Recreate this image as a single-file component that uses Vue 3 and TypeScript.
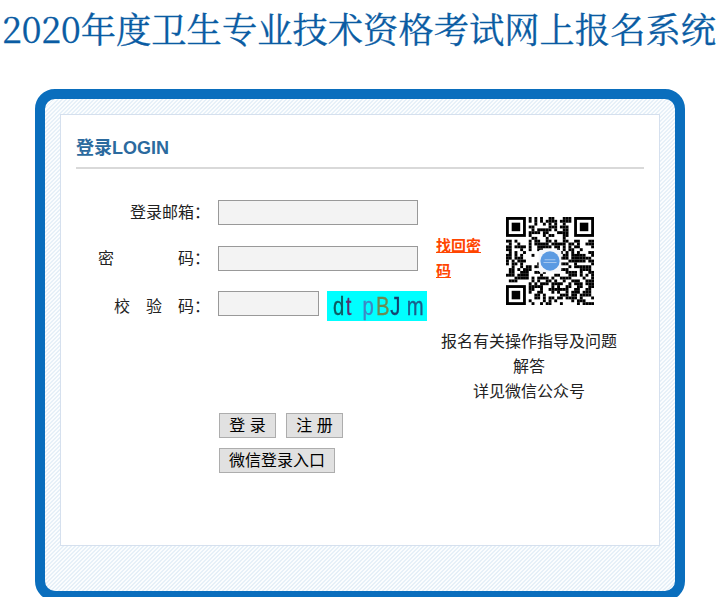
<script setup lang="ts">
const size = 31
function isFinder(x: number, y: number): boolean {
  return (x < 8 && y < 8) || (x >= size - 8 && y < 8) || (x < 8 && y >= size - 8)
}
function cells(): { x: number; y: number }[] {
  const out: { x: number; y: number }[] = []
  let s = 20200317
  for (let y = 0; y < size; y++) {
    for (let x = 0; x < size; x++) {
      s = (s * 1103515245 + 12345) & 0x7fffffff
      const on = ((s >> 16) & 7) < 4
      if (!isFinder(x, y) && on) out.push({ x, y })
    }
  }
  return out
}
const modules = cells()
const finders = [
  { x: 0, y: 0 },
  { x: size - 7, y: 0 },
  { x: 0, y: size - 7 },
]
const letters = [
  { t: 'd', c: 'c-d' },
  { t: 't', c: 'c-t' },
  { t: 'p', c: 'c-p' },
  { t: 'B', c: 'c-b' },
  { t: 'J', c: 'c-j' },
  { t: 'm', c: 'c-m' },
]
</script>

<template>
  <div class="page">
    <h1 class="title">2020年度卫生专业技术资格考试网上报名系统</h1>
    <div class="box">
      <div class="panel">
        <h2 class="heading">登录LOGIN</h2>
        <div class="layout">
          <div class="fields">
            <div class="row row-a">
              <label class="label">登录邮箱：</label>
              <input class="input" type="text" />
            </div>
            <div class="row row-b">
              <label class="label">密　　　　码：</label>
              <input class="input" type="password" />
            </div>
            <div class="row row-c">
              <label class="label">校　验　码：</label>
              <input class="input input-short" type="text" />
              <div class="captcha">
                <div class="captcha-text">
                  <span v-for="l in letters" :key="l.t" :class="l.c">{{ l.t }}</span>
                </div>
              </div>
            </div>
          </div>
          <a class="forgot" href="#">找回密码</a>
          <div class="qr-wrap">
            <svg class="qr" :viewBox="`0 0 ${size} ${size}`" width="88" height="88">
              <rect v-for="(m, i) in modules" :key="i" :x="m.x" :y="m.y" width="1.02" height="1.02" fill="#000" />
              <g v-for="(f, i) in finders" :key="'f' + i">
                <rect :x="f.x + 0.5" :y="f.y + 0.5" width="6" height="6" fill="none" stroke="#000" stroke-width="1" />
                <rect :x="f.x + 2" :y="f.y + 2" width="3" height="3" fill="#000" />
              </g>
              <rect x="11.5" y="11.5" width="8" height="8" rx="0.8" fill="#f4f6fa" />
              <circle cx="15.5" cy="15.5" r="3.4" fill="#5b9ae2" />
              <rect x="13.6" y="15" width="3.8" height="0.2" fill="#dfeafa" />
              <rect x="13.2" y="15.9" width="4.6" height="0.2" fill="#dfeafa" />
            </svg>
          </div>
          <p class="note">报名有关操作指导及问题<br />解答<br />详见微信公众号</p>
          <div class="actions">
            <div class="btn-row">
              <button class="btn" type="button">登 录</button>
              <button class="btn" type="button">注 册</button>
            </div>
            <div class="btn-row">
              <button class="btn" type="button">微信登录入口</button>
            </div>
          </div>
        </div>
      </div>
    </div>
  </div>
</template>

<style>
html, body { overflow: hidden; background: #fff; }
</style>

<style scoped>
.page {
  width: 724px;
  height: 597px;
  overflow: hidden;
  font-family: "Noto Serif CJK SC", "Liberation Serif", "Noto Sans CJK SC", serif;
}
.title {
  margin: 0 0 33px;
  padding-left: 2px;
  font-size: 35.3px;
  line-height: 56px;
  font-weight: 400;
  color: #0a5ca3;
  -webkit-text-stroke: 0.3px #0a5ca3;
  white-space: nowrap;
}
.box {
  width: 600px;
  margin-left: 35px;
  padding: 15px 15px 45px;
  border: 10px solid #0a6ebd;
  border-radius: 20px;
  background: repeating-linear-gradient(135deg, #e6f0f8 0, #e6f0f8 1.41px, #fbfdfe 1.41px, #fbfdfe 2.83px);
}
.panel {
  height: 432px;
  box-sizing: border-box;
  padding: 0 15px;
  border: 1px solid #d5e0ee;
  background: #fff;
  font-family: "Liberation Sans", "Noto Sans CJK SC", sans-serif;
  color: #222;
  font-size: 16px;
}
.heading {
  margin: 0;
  padding: 20px 0 6px;
  font-size: 18px;
  line-height: 26px;
  font-weight: 700;
  color: #2b6a9e;
  border-bottom: 2px solid #d9d9d9;
}
.layout {
  display: grid;
  grid-template-columns: 360px 46px 140px;
  grid-template-rows: 129px 75px auto;
  margin-top: 31px;
}
.row {
  display: flex;
  align-items: center;
  height: 25px;
}
.row-a { margin-bottom: 21px; }
.row-b { margin-bottom: 20px; }
.row-c { height: 30px; }
.label {
  flex: 0 0 134px;
  margin-right: 8px;
  text-align: right;
  white-space: pre;
  line-height: 25px;
}
.input {
  box-sizing: border-box;
  width: 200px;
  height: 25px;
  padding: 0 4px;
  border: 1px solid #999;
  background: #f3f3f3;
  outline: none;
}
.input-short {
  width: 101px;
  align-self: flex-start;
}
.captcha {
  flex: 0 0 100px;
  min-width: 0;
  box-sizing: border-box;
  height: 30px;
  margin-left: 8px;
  padding-left: 6px;
  background: #00ffff;
  filter: blur(0.35px);
}
.captcha-text {
  display: flex;
  width: 116px;
  font-family: "Liberation Sans", sans-serif;
  font-size: 26px;
  line-height: 30px;
  -webkit-text-stroke: 0.35px currentColor;
  transform: scaleX(0.78);
  transform-origin: left center;
}
.captcha-text span { display: block; flex: none; }
.c-d { color: #0c5a60; }
.c-t { color: #5a2f6e; margin-left: 2px; }
.c-p { color: #3f86c4; margin-left: 14px; }
.c-b { color: #6c8a52; margin-left: 3px; }
.c-j { color: #14406e; margin-left: 1px; }
.c-m { color: #1c5d8c; margin-left: 8px; }
.forgot {
  align-self: start;
  margin-top: 33px;
  font-size: 15px;
  line-height: 25px;
  font-weight: 700;
  color: #ff4500;
  text-decoration: underline;
}
.qr-wrap { padding: 17px 0 0 24px; }
.qr { display: block; filter: blur(0.3px); }
.note {
  grid-column: 2 / 4;
  grid-row: 2;
  width: 186px;
  margin: 0;
  line-height: 25px;
  text-align: center;
}
.actions {
  grid-column: 1;
  grid-row: 3;
  display: flex;
  flex-direction: column;
  gap: 10px;
  margin: 9px 0 0 143px;
}
.btn-row {
  display: flex;
  gap: 10px;
}
.btn {
  min-width: 57px;
  height: 25px;
  padding: 0 9px;
  border: 1px solid #adadad;
  border-radius: 0;
  background: #e1e1e1;
  color: #000;
  font-family: "Liberation Sans", "Noto Sans CJK SC", sans-serif;
  font-size: 16px;
  line-height: 23px;
}
</style>
